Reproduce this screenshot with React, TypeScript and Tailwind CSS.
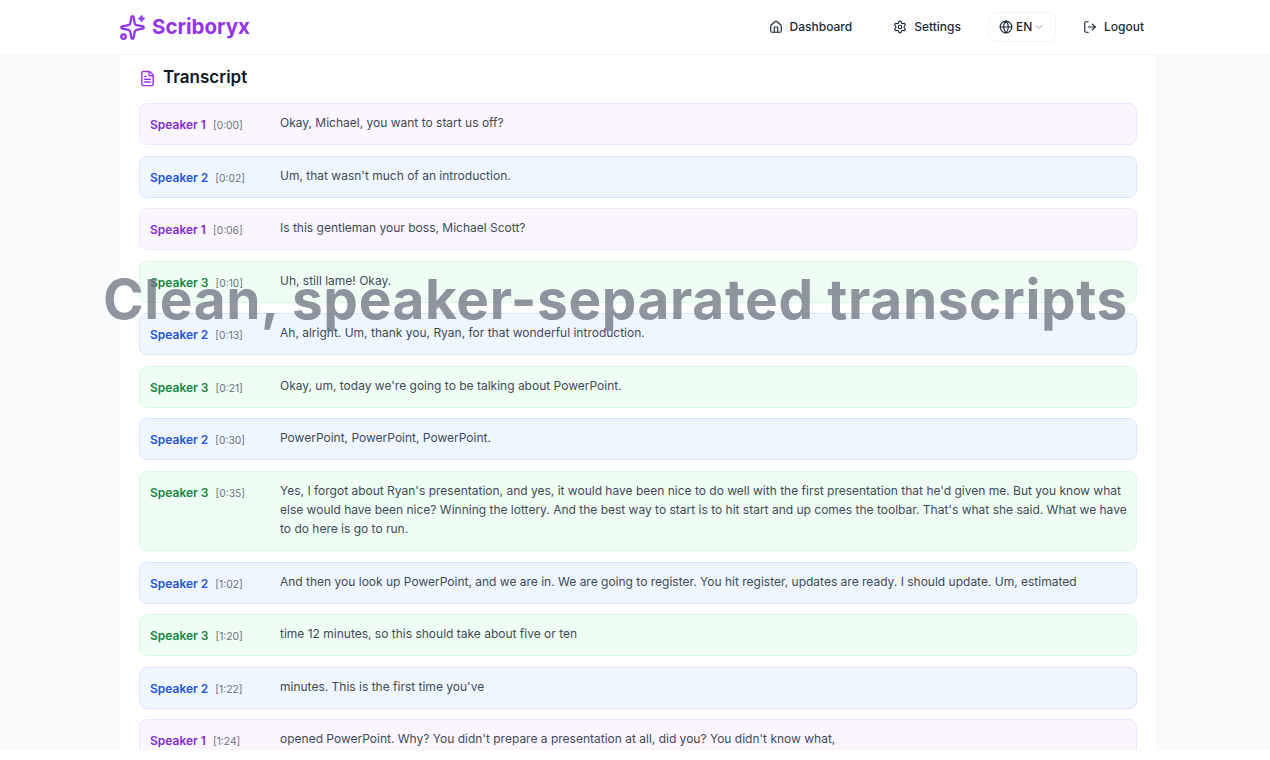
import { ChevronDown, FileText, Globe, Home, LogOut, Settings, Sparkles } from 'lucide-react';

type Row = { speaker: 1 | 2 | 3; time: string; text: string };

const rows: Row[] = [
  { speaker: 1, time: '0:00', text: 'Okay, Michael, you want to start us off?' },
  { speaker: 2, time: '0:02', text: "Um, that wasn't much of an introduction." },
  { speaker: 1, time: '0:06', text: 'Is this gentleman your boss, Michael Scott?' },
  { speaker: 3, time: '0:10', text: 'Uh, still lame! Okay.' },
  { speaker: 2, time: '0:13', text: 'Ah, alright. Um, thank you, Ryan, for that wonderful introduction.' },
  { speaker: 3, time: '0:21', text: "Okay, um, today we're going to be talking about PowerPoint." },
  { speaker: 2, time: '0:30', text: 'PowerPoint, PowerPoint, PowerPoint.' },
  {
    speaker: 3,
    time: '0:35',
    text: "Yes, I forgot about Ryan's presentation, and yes, it would have been nice to do well with the first presentation that he'd given me. But you know what else would have been nice? Winning the lottery. And the best way to start is to hit start and up comes the toolbar. That's what she said. What we have to do here is go to run.",
  },
  { speaker: 2, time: '1:02', text: 'And then you look up PowerPoint, and we are in. We are going to register. You hit register, updates are ready. I should update. Um, estimated' },
  { speaker: 3, time: '1:20', text: 'time 12 minutes, so this should take about five or ten' },
  { speaker: 2, time: '1:22', text: "minutes. This is the first time you've" },
  { speaker: 1, time: '1:24', text: "opened PowerPoint. Why? You didn't prepare a presentation at all, did you? You didn't know what," },
];

const tones = {
  1: { box: 'bg-[#faf5ff] border-[#f0e4fe]', name: 'text-[#8529d6]' },
  2: { box: 'bg-[#eff6ff] border-[#d6e6fe]', name: 'text-[#2555dc]' },
  3: { box: 'bg-[#f0fdf4] border-[#d5fbe1]', name: 'text-[#178541]' },
};

const NavLink = ({ icon, label, className }: { icon: React.ReactNode; label: string; className: string }) => (
  <a className={`flex items-center gap-[7px] text-[12px] font-medium text-[#1f2937] ${className}`}>
    {icon}
    {label}
  </a>
);

const App = () => {
  return (
    <div className="relative h-[760px] overflow-hidden bg-white font-['Inter',sans-serif]">
      <div className="flex h-[750px] flex-col overflow-hidden bg-[#f9fafb]">
        <nav className="flex h-[55px] shrink-0 items-center justify-between border-b border-[#f3f4f6] bg-white pl-[119px] pr-[126px]">
          <div className="flex items-center gap-[6px]">
            <Sparkles size={27} strokeWidth={2} className="text-[#9333ea]" />
            <span className="text-[20.5px] font-bold text-[#9333ea]">Scriboryx</span>
          </div>
          <div className="flex items-center">
            <NavLink icon={<Home size={14} />} label="Dashboard" className="mr-[41px]" />
            <NavLink icon={<Settings size={14} />} label="Settings" className="mr-[27px]" />
            <div className="mr-[27px] flex h-[30px] w-[68px] items-center gap-[3px] rounded-lg border border-[#f3f4f6] bg-white pl-[10px] text-[12px] font-medium text-[#1f2937]">
              <Globe size={14} />
              EN
              <ChevronDown size={12} className="-ml-[2px] text-[#9ca3af]" />
            </div>
            <NavLink icon={<LogOut size={14} />} label="Logout" className="" />
          </div>
        </nav>
        <main className="ml-[118px] mr-[112px] flex-1 border-x border-[#f3f4f6] bg-white px-5">
          <h2 className="flex h-[48px] items-center gap-[7px] pb-[2px] text-[17px] font-semibold text-[#111827]">
            <FileText size={17} className="text-[#9333ea]" />
            Transcript
          </h2>
          <div className="flex flex-col gap-[10.25px]">
            {rows.map((row) => (
              <div key={row.time} className={`flex rounded-lg border pb-[11.75px] pl-[10px] pr-[8px] pt-[9.25px] ${tones[row.speaker].box}`}>
                <div className="flex h-[19.25px] w-[130px] shrink-0 items-baseline pt-[4px] text-[12px] leading-[15.25px]">
                  <span className={`font-semibold ${tones[row.speaker].name}`}>Speaker {row.speaker}</span>
                  <span className="ml-[7px] text-[10.25px] text-[#6b7280]">[{row.time}]</span>
                </div>
                <p className="min-w-0 flex-1 text-[12px] leading-[19.25px] text-[#404a59]">{row.text}</p>
              </div>
            ))}
          </div>
        </main>
      </div>
      <div className="absolute left-[103px] top-[264px] whitespace-nowrap text-[55px] font-bold leading-[70px] tracking-[0.6px] text-[#6b7280]/75">
        Clean, speaker-separated transcripts
      </div>
    </div>
  );
};

export default App;
